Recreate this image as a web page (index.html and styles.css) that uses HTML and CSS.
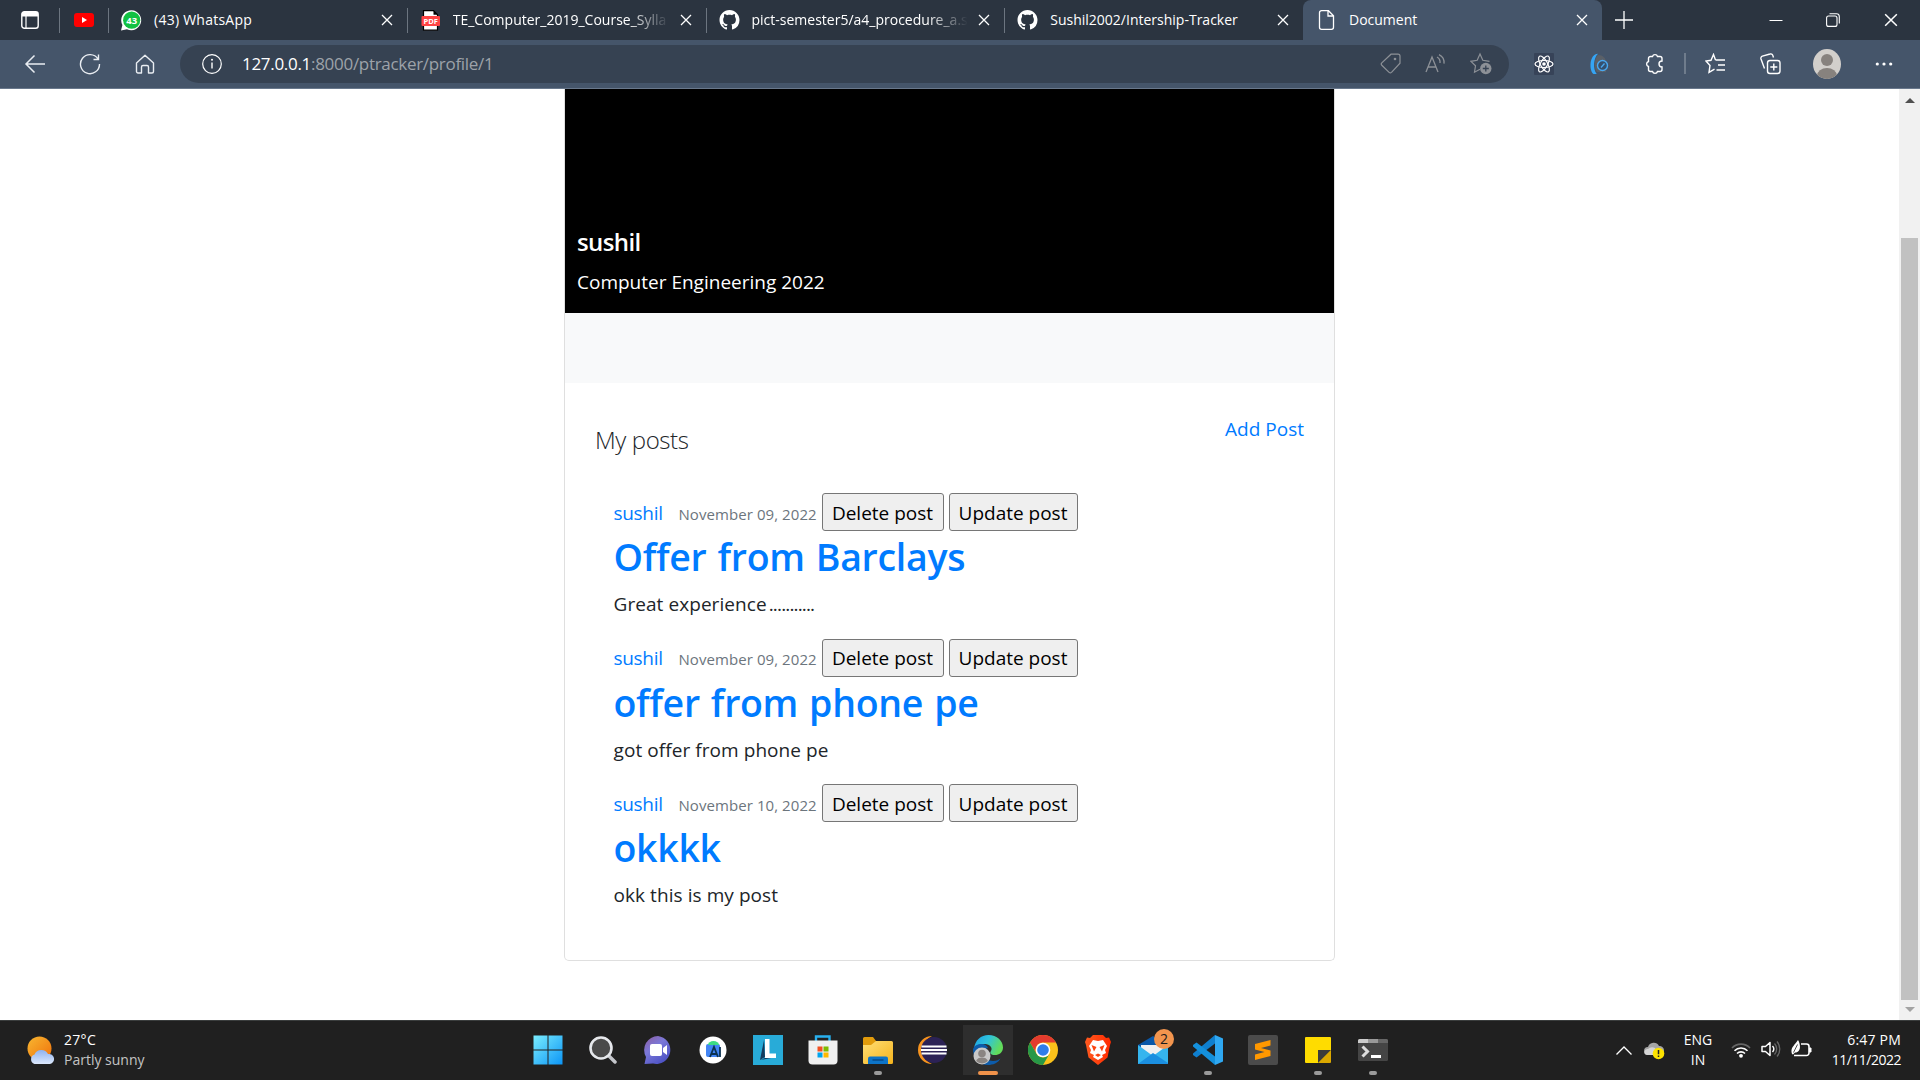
FILE: index.html
```html
<!DOCTYPE html>
<html lang="en">
<head>
<meta charset="utf-8">
<title>Document</title>
<link rel="stylesheet" href="styles.css">
</head>
<body>
<svg width="0" height="0" class="defs" aria-hidden="true">
  <defs>
    <symbol id="close" viewBox="0 0 12 12"><path d="M1 1l10 10M11 1L1 11" fill="none" stroke="#fff" stroke-width="1.3"/></symbol>
    <symbol id="github" viewBox="0 0 16 16"><path fill="#fff" d="M8 0C3.58 0 0 3.58 0 8c0 3.54 2.29 6.53 5.47 7.59.4.07.55-.17.55-.38 0-.19-.01-.82-.01-1.49-2.01.37-2.53-.49-2.69-.94-.09-.23-.48-.94-.82-1.13-.28-.15-.68-.52-.01-.53.63-.01 1.08.58 1.23.82.72 1.21 1.87.87 2.33.66.07-.52.28-.87.51-1.07-1.78-.2-3.64-.89-3.64-3.95 0-.87.31-1.59.82-2.15-.08-.2-.36-1.02.08-2.12 0 0 .67-.21 2.2.82.64-.18 1.32-.27 2-.27s1.36.09 2 .27c1.53-1.04 2.2-.82 2.2-.82.44 1.1.16 1.92.08 2.12.51.56.82 1.27.82 2.15 0 3.07-1.87 3.75-3.65 3.95.29.25.54.73.54 1.48 0 1.07-.01 1.93-.01 2.2 0 .21.15.46.55.38A8.01 8.01 0 0 0 16 8c0-4.42-3.58-8-8-8z"/></symbol>
    <linearGradient id="gWin" gradientUnits="userSpaceOnUse" x1="0" y1="0" x2="30" y2="30"><stop offset="0" stop-color="#7cefff"/><stop offset="1" stop-color="#0a93f5"/></linearGradient>
    <linearGradient id="gChat" x1="0" y1="0" x2="0.7" y2="1"><stop offset="0" stop-color="#8e5c9f"/><stop offset=".45" stop-color="#7b78d8"/><stop offset="1" stop-color="#4a50c4"/></linearGradient>
    <linearGradient id="gSun" x1="0" y1="0" x2="1" y2="1"><stop offset="0" stop-color="#f7b731"/><stop offset="1" stop-color="#f0700a"/></linearGradient>
    <linearGradient id="gCloud" x1="0" y1="0" x2="0" y2="1"><stop offset="0" stop-color="#8fb2ee"/><stop offset="1" stop-color="#dce8fc"/></linearGradient>
    <linearGradient id="gFolder" x1="0" y1="0" x2="1" y2="1"><stop offset="0" stop-color="#ffdf76"/><stop offset="1" stop-color="#f5b31c"/></linearGradient>
    <linearGradient id="gEdge" x1="0" y1="0" x2="1" y2=".4"><stop offset="0" stop-color="#1c9fe6"/><stop offset=".5" stop-color="#2fc3dc"/><stop offset="1" stop-color="#62dc5a"/></linearGradient>
    <linearGradient id="gBrave" x1="0" y1="0" x2="1" y2="0"><stop offset="0" stop-color="#ff5a1f"/><stop offset="1" stop-color="#ff2a00"/></linearGradient>
  </defs>
</svg>

<header class="tabstrip">
  <div class="tab-menu"><svg width="18" height="18" viewBox="0 0 18 18"><rect x=".8" y=".8" width="16.4" height="16.4" rx="2.5" fill="none" stroke="#fff" stroke-width="1.4"/><path d="M1 1h16v4.5H1z" fill="#fff"/><path d="M5 5v12" stroke="#fff" stroke-width="1.2"/></svg></div>
  <div class="tab-pinned"><svg width="20" height="14" viewBox="0 0 20 14"><rect width="20" height="14" rx="3" fill="red"/><path d="M8 4l5 3-5 3z" fill="#fff"/></svg></div>
  <div class="tab">
    <svg width="21" height="21" viewBox="0 0 21 21"><path d="M0 20.5L1.4 15A10 10 0 1 1 6 19.3z" fill="#fff"/><circle cx="10.7" cy="10.2" r="8.6" fill="#12c143"/><text x="10.7" y="13.7" text-anchor="middle" class="wa-count">43</text></svg>
    <span class="tab-title wide">(43) WhatsApp</span>
    <svg width="12" height="12"><use href="#close"/></svg>
  </div>
  <div class="tab">
    <svg width="21" height="21" viewBox="0 0 20 21"><path d="M3 .7h10l4 4v15.500H3z" fill="#fff" stroke="#000" stroke-width="1.200"/><path d="M13 .7v4h4z" fill="#000"/><rect x="1" y="6" width="18.500" height="10" rx="1" fill="#f44"/><text x="10.200" y="13.700" text-anchor="middle" class="pdf">PDF</text></svg>
    <span class="tab-title fade">TE_Computer_2019_Course_Sylla</span>
    <svg width="12" height="12"><use href="#close"/></svg>
  </div>
  <div class="tab">
    <svg width="21" height="20"><use href="#github"/></svg>
    <span class="tab-title fade">pict-semester5/a4_procedure_a.s</span>
    <svg width="12" height="12"><use href="#close"/></svg>
  </div>
  <div class="tab">
    <svg width="21" height="20"><use href="#github"/></svg>
    <span class="tab-title">Sushil2002/Intership-Tracker</span>
    <svg width="12" height="12"><use href="#close"/></svg>
  </div>
  <div class="tab active">
    <svg width="21" height="20" viewBox="0 0 20 20"><path d="M5 .7h7l5 5v11.600a2 2 0 0 1-2 2H5a2 2 0 0 1-2-2V2.700a2 2 0 0 1 2-2zM11.500 1v5h5" fill="none" stroke="#fff" stroke-width="1.300"/></svg>
    <span class="tab-title">Document</span>
    <svg width="12" height="12"><use href="#close"/></svg>
  </div>
  <div class="new-tab"><svg width="18" height="18" viewBox="0 0 18 18"><path d="M9 0v18M0 9h18" stroke="#fff" stroke-width="1.300"/></svg></div>
  <div class="win-btns">
    <span><svg width="14" height="14" viewBox="0 0 14 14"><path d="M.5 7.500h13" stroke="#fff"/></svg></span>
    <span><svg width="14" height="14" viewBox="0 0 14 14"><rect x=".6" y="3" width="10.400" height="10.400" rx="2" fill="none" stroke="#fff" stroke-width="1.100"/><path d="M3.500.7H10.500a2.800 2.800 0 0 1 2.800 2.800V10.500" fill="none" stroke="#fff" stroke-width="1.100"/></svg></span>
    <span><svg width="14" height="14" viewBox="0 0 12 12"><use href="#close"/></svg></span>
  </div>
</header>

<nav class="toolbar">
  <div class="nav-btns">
    <span><svg width="22" height="20" viewBox="0 0 22 20"><path d="M10.500 1.500L2 10l8.500 8.500M2 10h19" fill="none" stroke="#e9edf2" stroke-width="1.500"/></svg></span>
    <span><svg width="22" height="22" viewBox="0 0 22 22"><path d="M19 6a9.500 9.500 0 1 0 1.500 5M19.500 1.500V6.500H14.500" fill="none" stroke="#e9edf2" stroke-width="1.400"/></svg></span>
    <span><svg width="20" height="20" viewBox="0 0 20 20"><path d="M1.500 9L10 1.200 18.500 9v8.500a1.500 1.500 0 0 1-1.500 1.500h-3.500v-6a1.500 1.500 0 0 0-1.500-1.500H8A1.500 1.500 0 0 0 6.500 13v6H3a1.500 1.500 0 0 1-1.500-1.500z" fill="none" stroke="#e9edf2" stroke-width="1.400" stroke-linejoin="round"/></svg></span>
  </div>
  <div class="omnibox">
    <svg width="20" height="20" viewBox="0 0 20 20"><circle cx="10" cy="10" r="9.300" fill="none" stroke="#fff" stroke-width="1.200"/><path d="M10 8.500v6" stroke="#fff" stroke-width="1.400"/><circle cx="10" cy="5.800" r="1" fill="#fff"/></svg>
    <span class="url"><b>127.0.0.1</b>:8000/ptracker/profile/1</span>
    <div class="omni-icons">
      <span><svg width="21" height="21" viewBox="0 0 21 21"><path d="M11 1.200h7a2 2 0 0 1 2 2v7L11.500 19.300a1.700 1.700 0 0 1-2.400 0L1.800 12.300a1.700 1.700 0 0 1 0-2.400z" fill="none" stroke="#8d9197" stroke-width="1.200"/><circle cx="15" cy="6" r="1.300" fill="#8d9197"/></svg></span>
      <span><svg width="21" height="19" viewBox="0 0 21 19"><path d="M1 18L7 3l6 15M3 13h8M12 3a6 6 0 0 1 3 6M14 .6a9 9 0 0 1 5 9" fill="none" stroke="#8d9197" stroke-width="1.300"/></svg></span>
      <span><svg width="22" height="23" viewBox="0 0 22 23"><path d="M10 17.200l-5.500 3 1-6.400L1 9.300l6.200-1L10 2l2.800 6.300 6.700 1" fill="none" stroke="#8d9197" stroke-width="1.200"/><circle cx="15.800" cy="16.500" r="5.700" fill="#8d9197"/><path d="M15.800 13.500v6M12.800 16.500h6" stroke="#364252" stroke-width="1.300"/></svg></span>
    </div>
  </div>
  <div class="ext">
    <span><svg width="20" height="22" viewBox="0 0 20 22"><rect width="20" height="22" rx="1" fill="#374358"/><g fill="none" stroke="#fff" stroke-width="1.200"><ellipse cx="10" cy="11" rx="9" ry="3.500"/><ellipse cx="10" cy="11" rx="9" ry="3.500" transform="rotate(60 10 11)"/><ellipse cx="10" cy="11" rx="9" ry="3.500" transform="rotate(120 10 11)"/></g><circle cx="10" cy="11" r="1.800" fill="#fff"/></svg></span>
    <span><svg width="20" height="22" viewBox="0 0 20 22"><path d="M9 2c5 0 8 3 8 8v9H8C5 15 5 6 9 2z" fill="#5a6068"/><path d="M9 .8C0 1 0 18 4.500 21h3.200C3.500 16 4.500 5 9 .8z" fill="#35a5f5"/><circle cx="13.500" cy="12.500" r="5" fill="#34506e" stroke="#4aa8f0" stroke-width="1.400"/><path d="M12 14.500l3.500-4" stroke="#4aa8f0" stroke-width="1.400"/></svg></span>
    <span><svg width="20" height="22" viewBox="0 0 20 22"><path d="M5.500 3.500h2a2.600 2.600 0 0 1 5 0H15a2 2 0 0 1 2 2V8a3 3 0 1 0 0 6v2.500a2 2 0 0 1-2 2h-2.500a2.600 2.600 0 0 1-5 0h-2a2 2 0 0 1-2-2v-3a2.600 2.600 0 0 1 0-5v-3a2 2 0 0 1 2-2z" fill="none" stroke="#fff" stroke-width="1.400"/></svg></span>
  </div>
  <div class="divider"></div>
  <div class="ext">
    <span><svg width="21" height="21" viewBox="0 0 21 21"><path d="M10.500 7L8.500 1.500 6 7.300l-5 .8 4 4.300-1 7 5.500-3.200M10.500 7H20M13 12h7M11.500 17H20" fill="none" stroke="#fff" stroke-width="1.400"/></svg></span>
    <span><svg width="21" height="22" viewBox="0 0 21 22"><rect x="7.500" y="7.500" width="12.500" height="13" rx="2.500" fill="none" stroke="#fff" stroke-width="1.400"/><path d="M13.800 10.500v7M10.300 14h7M4.500 15.500L1 6a2.200 2.200 0 0 1 1.400-2.800L10 1a2.200 2.200 0 0 1 2.800 1.400l.7 2" fill="none" stroke="#fff" stroke-width="1.400"/></svg></span>
    <span><svg class="avatar" width="28" height="30" viewBox="0 0 28 30"><defs><clipPath id="av"><ellipse cx="14" cy="15" rx="14" ry="15"/></clipPath></defs><g clip-path="url(#av)"><path d="M0 0h28v30H0z" fill="#d2cfcb"/><circle cx="14" cy="11" r="6" fill="#87827e"/><ellipse cx="14" cy="27" rx="10" ry="8" fill="#87827e"/></g></svg></span>
    <span><svg class="dots" width="18" height="4" viewBox="0 0 18 4"><circle cx="2.300" cy="2" r="1.600" fill="#fff"/><circle cx="9" cy="2" r="1.600" fill="#fff"/><circle cx="15.700" cy="2" r="1.600" fill="#fff"/></svg></span>
  </div>
</nav>

<div class="viewport">
  <main class="page">
    <section class="card">
      <div class="cover">
        <h5>sushil</h5>
        <p>Computer Engineering 2022</p>
      </div>
      <div class="band"></div>
      <div class="card-body">
        <div class="posts-head">
          <p class="lead">My posts</p>
          <a class="add">Add Post</a>
        </div>
        <article class="post">
          <div class="meta"><a class="user">sushil</a><small>November 09, 2022</small><button class="del">Delete post</button><button class="upd">Update post</button></div>
          <h2>Offer from Barclays</h2>
          <p>Great experience <span class="ellipsis">...........</span></p>
        </article>
        <article class="post">
          <div class="meta"><a class="user">sushil</a><small>November 09, 2022</small><button class="del">Delete post</button><button class="upd">Update post</button></div>
          <h2>offer from phone pe</h2>
          <p>got offer from phone pe</p>
        </article>
        <article class="post">
          <div class="meta"><a class="user">sushil</a><small>November 10, 2022</small><button class="del">Delete post</button><button class="upd">Update post</button></div>
          <h2>okkkk</h2>
          <p>okk this is my post</p>
        </article>
      </div>
    </section>
  </main>
  <aside class="scrollbar"><span class="arrow up"></span><span class="thumb"></span><span class="arrow down"></span></aside>
</div>

<footer class="taskbar">
  <div class="weather">
    <svg width="28" height="28" viewBox="0 0 28 28"><circle cx="12.500" cy="12.500" r="12" fill="url(#gSun)"/><path d="M7.500 28a5 5 0 0 1 0-9.500 7.500 7.500 0 0 1 13.500-.5 5 5 0 0 1 2 10z" fill="url(#gCloud)"/></svg>
    <div class="wtext"><span class="temp">27°C</span><span class="sky">Partly sunny</span></div>
  </div>
  <div class="apps">
    <span class="app"><svg width="30" height="30" viewBox="0 0 30 30"><path d="M.5.500h14v14h-14zM15.500.500h14v14h-14zM.5 15.500h14v14h-14zM15.500 15.500h14v14h-14z" fill="url(#gWin)"/></svg></span>
    <span class="app"><svg width="28" height="28" viewBox="0 0 28 28"><path d="M19 19l7 7" stroke="#c4c6cb" stroke-width="3.500" stroke-linecap="round"/><circle cx="12" cy="12" r="10.500" fill="#4a4a4a" stroke="#e6e8ec" stroke-width="2.600"/></svg></span>
    <span class="app"><svg width="30" height="28" viewBox="0 0 30 28"><path d="M15 0a14 14 0 1 1-5 27.500L1.500 28 3 21A14 14 0 0 1 15 0z" fill="url(#gChat)"/><rect x="7" y="8" width="12" height="12" rx="2" fill="#fff"/><path d="M20 12l4-3v10l-4-3z" fill="#fff"/></svg></span>
    <span class="app"><svg width="28" height="28" viewBox="0 0 28 28"><circle cx="14" cy="14" r="13.500" fill="#fff"/><rect x="7" y="8" width="14" height="13" rx="2" fill="#4285f4"/><path d="M9 9a5.500 4 0 0 1 11 0z" fill="#3ddc84"/><path d="M11 21l4-10 4 10M12.500 18h5M21 11v10" fill="none" stroke="#0b3150" stroke-width="1.800"/></svg></span>
    <span class="app"><svg width="30" height="30" viewBox="0 0 30 30"><path d="M0 0h30v30H0z" fill="#28abd8"/><path d="M11 5L7 25l5-3z" fill="#123a5c"/><path d="M12 4h4.500v14.500H23V23H12z" fill="#fff"/><path d="M7 25l5-2h6z" fill="#123a5c"/></svg></span>
    <span class="app"><svg width="30" height="30" viewBox="0 0 30 30"><path d="M8 7V1.500h13.500V7" fill="none" stroke="#28b0ee" stroke-width="2.400"/><path d="M.5 5.500h29v20a4 4 0 0 1-4 4h-21a4 4 0 0 1-4-4z" fill="#f0f0f0"/><path d="M9.500 11.500h5v5h-5z" fill="#f25022"/><path d="M15.500 11.500h5v5h-5z" fill="#7fba00"/><path d="M9.500 17.500h5v5h-5z" fill="#00a4ef"/><path d="M15.500 17.500h5v5h-5z" fill="#ffb900"/></svg></span>
    <span class="app run"><svg width="30" height="28" viewBox="0 0 30 28"><path d="M0 2.500A1.500 1.500 0 0 1 1.500 1H10l3 4v6H0z" fill="#e19b0b"/><path d="M0 9h8l5-4h15.500A1.500 1.500 0 0 1 30 6.500v20a1.500 1.500 0 0 1-1.500 1.500h-27A1.500 1.500 0 0 1 0 26.500z" fill="url(#gFolder)"/><path d="M5 28v-5.500a2 2 0 0 1 2-2h16a2 2 0 0 1 2 2V28z" fill="#0d74c8"/><path d="M9.500 24h11" stroke="#063f78" stroke-width="1.200"/></svg></span>
    <span class="app"><svg width="30" height="28" viewBox="0 0 30 28"><path d="M14 0a14 14 0 0 0 0 28 16 16 0 0 1-9-14A16 16 0 0 1 14 0z" fill="#f7941e"/><circle cx="16" cy="14" r="13" fill="#2c2255"/><path d="M3.500 10.500h25M3 14h26M3.500 17.500h25" stroke="#fff" stroke-width="1.900"/></svg></span>
    <span class="app current"><svg width="30" height="30" viewBox="0 0 30 30"><path d="M1 14C2 5 8 0 15.500 0 24 0 30 6 30 12.500c0 5-4 7.500-8 7.500-4.500 0-5.500-2-4-4 2-3-1-7-6-7-6 0-10 4-11 9z" fill="url(#gEdge)"/><path d="M0 14c2-6 13-7 15-1-6 1-5 13 5 13 4 0 6-1.500 7.500-2.500C25 28 20 30 15 30 6 30 0 23 0 14z" fill="#0d5cab"/><circle cx="9" cy="21" r="8.500" fill="#c9c9c9"/><circle cx="9" cy="18.500" r="3.800" fill="#8a8582"/><path d="M3 26a6.500 5.500 0 0 1 12 0 8.500 8.500 0 0 1-12 0z" fill="#8a8582"/></svg></span>
    <span class="app"><svg width="30" height="30" viewBox="0 0 30 30"><circle cx="15" cy="15" r="15" fill="#fbc21b"/><path d="M2 7.500A15 15 0 0 1 28 7.500H15A7.500 7.500 0 0 0 8.500 18.800z" fill="#e33b2e"/><path d="M2 7.500a15 15 0 0 0 13 22.500l6.500-11.200a7.500 7.500 0 0 1-13 0z" fill="#279847"/><circle cx="15" cy="15" r="7.300" fill="#fff"/><circle cx="15" cy="15" r="5.800" fill="#2f7de9"/></svg></span>
    <span class="app"><svg width="26" height="30" viewBox="0 0 26 30"><path d="M8 0h10l3 3 3-.5L26 7l-1 3-2.500 12.500L13 30l-9.500-7.500L1 10 0 7l2-4.500 3 .5z" fill="url(#gBrave)"/><path d="M8 5l5 1 5-1 4 6-2 4 1 3-4 2 1 2-5 3-5-3 1-2-4-2 1-3-2-4z" fill="#fff"/><path d="M6.500 10l5 2-2.500 4.500zM19.500 10l-5 2 2.500 4.500zM10 20l3-1.500 3 1.500-3 2z" fill="#fb4310"/></svg></span>
    <span class="app"><svg width="30" height="28" viewBox="0 0 30 28"><path d="M0 9L15 0l15 9v3H0z" fill="#0a58a8"/><path d="M3 9h24v12H3z" fill="#f1f1f1"/><path d="M0 9l15 11L30 9v19H0z" fill="#35b5ee"/><path d="M0 28h30V27L15 17z" fill="#1b8fe0"/></svg><i class="badge">2</i></span>
    <span class="app run"><svg width="30" height="30" viewBox="0 0 30 30"><path d="M22 0l8 3.500v23L22 30z" fill="#2fa8f2"/><path d="M22 0v8.500L3.500 22.500 0 20v-1.500z" fill="#0f7fce"/><path d="M22 30v-8.500L3.500 7.500 0 10v1.500z" fill="#1490dc"/></svg></span>
    <span class="app"><svg width="30" height="30" viewBox="0 0 30 30"><rect width="30" height="30" rx="2" fill="#4b4b4b"/><path d="M7 9l15.500-4v5.500L13 13l9.500 2.500V21L7 25v-5.500l9.500-2.500L7 14.500z" fill="#ff9800"/></svg></span>
    <span class="app run"><svg width="26" height="26" viewBox="0 0 26 26"><path d="M1 0h24a1 1 0 0 1 1 1v12L13 26H1a1 1 0 0 1-1-1V1a1 1 0 0 1 1-1z" fill="#ffdc00"/><path d="M13 13h13L13 26z" fill="#3b3b3b"/><path d="M26 13v12a1 1 0 0 1-1 1H13z" fill="#dba800"/></svg></span>
    <span class="app run"><svg width="30" height="22" viewBox="0 0 30 22"><rect width="30" height="22" rx="1.500" fill="#454545"/><path d="M0 4V1.500A1.500 1.500 0 0 1 1.500 0H10v4z" fill="#ccc"/><path d="M10 0h10v4H10z" fill="#999"/><path d="M20 0h8.500A1.500 1.500 0 0 1 30 1.500V4H20z" fill="#666"/><path d="M4.500 7.500l5 5-5 5" fill="none" stroke="#ddd" stroke-width="3"/><path d="M13 17.500h10" stroke="#fff" stroke-width="3"/></svg></span>
  </div>
  <div class="tray">
    <svg class="chev" width="16" height="9" viewBox="0 0 16 9"><path d="M.5 8.500L8 1l7.500 7.500" fill="none" stroke="#fff" stroke-width="1.300"/></svg>
    <svg class="cloud" width="21" height="18" viewBox="0 0 21 18"><path d="M4 13a4 4 0 0 1 0-8A6 6 0 0 1 15 4a4.500 4.500 0 0 1 1 9z" fill="#a5a5a5"/><path d="M3 13a3 3 0 0 1 1-6 6 6 0 0 1 7-1l3 7z" fill="#d5d5d5"/><circle cx="14.500" cy="11.500" r="5.800" fill="#fde300"/><path d="M14.500 8v4.300M14.500 13.400v1.600" stroke="#222" stroke-width="1.500"/></svg>
    <div class="lang"><span>ENG</span><span>IN</span></div>
    <svg class="wifi" width="20" height="16" viewBox="0 0 20 16"><g fill="none" stroke-width="1.600"><path d="M1 6a12.500 12.500 0 0 1 18 0" stroke="#666"/><path d="M3.500 8.800a9 9 0 0 1 13 0M6 11.500a5.800 5.800 0 0 1 8 0" stroke="#fff"/></g><circle cx="10" cy="13.800" r="1.900" fill="#fff"/></svg>
    <svg class="vol" width="20" height="18" viewBox="0 0 20 18"><path d="M1 6.500h3.500L9 2.500v13L4.500 11.500H1z" fill="none" stroke="#fff" stroke-width="1.500" stroke-linejoin="round"/><path d="M11.500 6a4.500 4.500 0 0 1 0 6" fill="none" stroke="#fff" stroke-width="1.400"/><path d="M13.500 3.500a8 8 0 0 1 0 11M16 1.500a11.500 11.500 0 0 1 0 15" fill="none" stroke="#666" stroke-width="1.300"/></svg>
    <svg class="bat" width="21" height="18" viewBox="0 0 21 18"><path d="M10 4h5.500A2.500 2.500 0 0 1 18 6.500v6.500a2.500 2.500 0 0 1-2.500 2.500H3" fill="none" stroke="#fff" stroke-width="1.600"/><path d="M18.500 8h1.500v4h-1.500z" fill="#fff" stroke="#fff"/><path d="M7 0C10 5 10 12 4 12.500L2 14.500 1 14C-1 8 3 6 7 0z" fill="#fff"/><path d="M6.500 4.500L2.500 12.500" stroke="#222" stroke-width=".8"/></svg>
    <div class="clock"><span class="time">6:47 PM</span><span class="date">11/11/2022</span></div>
  </div>
</footer>
</body>
</html>
```
FILE: styles.css
```css
* { box-sizing: border-box; }
body {
  margin: 0;
  width: 1920px;
  height: 1080px;
  overflow: hidden;
  display: flex;
  flex-direction: column;
  font-family: "Open Sans", "Noto Sans", sans-serif;
  color: #212529;
  background: #fff;
}
svg { display: block; flex: none; }
.defs { position: absolute; }
h2, h5, p { margin: 0; }

/* Tab strip */
.tabstrip {
  display: flex;
  height: 40px;
  flex: none;
  background: #2b3440;
  color: #fff;
}
.tab-menu { width: 59px; padding: 11px 0 0 21px; }
.tab-pinned { width: 49px; padding: 13px 0 0 15px; }
.tab-pinned, .tab { background: linear-gradient(#6c7580, #6c7580) 0 8px / 1px 25px no-repeat; }
.tab {
  display: flex;
  align-items: center;
  width: 298.75px;
  padding: 0 14px 0 13px;
  font-size: 14px;
}
.tab-title {
  flex: 1;
  margin-left: 12px;
  white-space: nowrap;
  line-height: 24px;
}
.tab-title.wide { letter-spacing: .25px; }
.fade {
  margin-right: 10px;
  -webkit-mask-image: linear-gradient(90deg, #000 calc(100% - 42px), transparent);
  mask-image: linear-gradient(90deg, #000 calc(100% - 42px), transparent);
}
.tab.active { background: #45556a; border-radius: 8px 8px 0 0; }
.wa-count { font: 700 9.5px "Open Sans", sans-serif; fill: #fff; }
.pdf { font: 700 7.5px "Open Sans", sans-serif; fill: #fff; }
.new-tab { width: 44px; padding: 11px 0 0 13px; }
.win-btns { display: flex; margin-left: auto; }
.win-btns span { width: 57.5px; padding: 13px 0 0 21px; }

/* Toolbar */
.toolbar {
  display: flex;
  height: 49px;
  flex: none;
  background: #45556a;
  border-bottom: 1px solid #69788c;
}
.nav-btns { display: flex; width: 180px; padding: 0 0 1px 7px; }
.nav-btns span { display: grid; place-items: center; width: 55px; }
.omnibox {
  display: flex;
  align-items: center;
  width: 1329px;
  height: 38px;
  margin-top: 5px;
  padding: 0 5px 1px 22px;
  border-radius: 19px;
  background: #364252;
}
.url { margin-left: 20px; font-size: 17px; letter-spacing: -.3px; color: #9da2a9; white-space: nowrap; }
.url b { font-weight: 400; color: #fff; }
.omni-icons { display: flex; margin-left: auto; }
.omni-icons span { display: grid; place-items: center; width: 45.5px; }
.ext { display: flex; padding-bottom: 1px; }
.ext span { display: grid; place-items: center; width: 55.5px; }
.omnibox + .ext { margin-left: 7px; }
.divider { width: 2px; height: 21px; margin: 13px 0 0 1px; background: #6f7c8c; }
.divider + .ext { margin-left: 2px; }
.avatar { margin-left: 2px; }
.dots { margin-left: 5px; }

/* Page */
.viewport { display: flex; flex: none; height: 931px; }
.page { width: 1899px; height: 931px; }
.card {
  width: 771px;
  height: 872px;
  margin-left: 564px;
  border: 1px solid #dfdfdf;
  border-top: 0;
  border-radius: 0 0 5px 5px;
}
.cover { height: 224px; padding: 138px 0 0 12px; background: #000; color: #fff; }
.cover h5 { font-size: 24px; font-weight: 600; line-height: 30px; letter-spacing: -.6px; }
.cover p { margin-top: 10px; font-size: 19px; line-height: 30px; }
.band { height: 70px; background: #f8f9fa; }
.card-body { padding: 31px 30px 0; }
.posts-head { display: flex; justify-content: space-between; height: 79px; }
.lead { margin-top: 7px; font-size: 24px; font-weight: 300; line-height: 37px; letter-spacing: -.4px; }
.add { font-size: 19px; line-height: 30px; color: #007bff; }
.post { height: 145.6px; padding-left: 18.5px; font-size: 19px; white-space: nowrap; }
.meta { display: flex; align-items: center; height: 38px; }
.user, h2 { color: #007bff; }
.user { width: 49px; letter-spacing: -.3px; padding-top: 1px; }
.meta small { width: 138px; padding-top: 3px; margin-left: 16px; font-size: 15px; letter-spacing: .07px; color: #6c757d; }
.meta button {
  height: 38px;
  padding: 1px 0 0;
  border: 1px solid #767676;
  border-radius: 3px;
  background: #efefef;
  color: #000;
  font: 19px "Open Sans", sans-serif;
  text-align: center;
}
.meta .del { width: 122px; margin-left: 5px; }
.meta .upd { width: 129px; margin-left: 5px; }
h2 { height: 48px; padding-top: 1px; font-size: 37.5px; font-weight: 600; line-height: 49px; letter-spacing: -.3px; word-spacing: 1.6px; }
.post p { margin-top: 10px; line-height: 30px; letter-spacing: .07px; }
.ellipsis { margin-left: -3px; letter-spacing: -.85px; }

.scrollbar { display: flex; flex-direction: column; align-items: center; width: 21px; background: #f1f1f1; }
.arrow { border: 5px solid transparent; }
.up { margin-top: 9px; border-bottom-color: #505050; border-top: 0; }
.down { margin-top: 7px; border-top-color: #a3a3a3; border-bottom: 0; }
.thumb { width: 17px; height: 762px; margin-top: 135px; background: #c1c1c1; }

/* Taskbar */
.taskbar {
  display: flex;
  height: 60px;
  flex: none;
  background: #202020;
  border-top: 1px solid #3a3d3d;
  color: #fff;
  font-size: 14px;
}
.weather { display: flex; width: 520px; padding: 9px 0 0 27px; }
.weather svg { margin-top: 6px; }
.wtext { display: flex; flex-direction: column; margin-left: 9px; line-height: 20px; }
.temp { letter-spacing: .3px; }
.sky { color: #c4c4c4; }
.apps { display: flex; }
.app { position: relative; display: grid; place-items: center; width: 55px; height: 59px; padding-bottom: 1px; }
.run::after, .current::after {
  content: "";
  position: absolute;
  bottom: 5px;
  left: 24px;
  width: 8px;
  height: 4px;
  border-radius: 2px;
  background: #9a9a9a;
}
.current::after { left: 18px; width: 20px; background: #f0924a; }
.current { background: linear-gradient(#2e2e2e, #2e2e2e) 3px 4px / 50px 50px no-repeat; }
.badge {
  position: absolute;
  top: 8px;
  left: 29px;
  width: 20px;
  height: 20px;
  border-radius: 50%;
  background: #f2954e;
  color: #1c1c1c;
  font-size: 14px;
  font-style: normal;
  line-height: 20px;
  text-align: center;
}
.tray { display: flex; margin-left: auto; padding: 9px 19px 0 0; }
.chev { margin: 16px 12px 0 0; }
.cloud { margin: 12px 0 0; }
.lang { display: flex; flex-direction: column; align-items: center; width: 66px; line-height: 20px; }
.wifi { margin: 12px 10px 0 0; }
.vol { margin: 10px 10px 0 0; }
.bat { margin: 10px 0 0; }
.clock { display: flex; flex-direction: column; align-items: flex-end; width: 89px; line-height: 20px; }
.time { letter-spacing: .2px; }
.date { letter-spacing: -.5px; }
```
